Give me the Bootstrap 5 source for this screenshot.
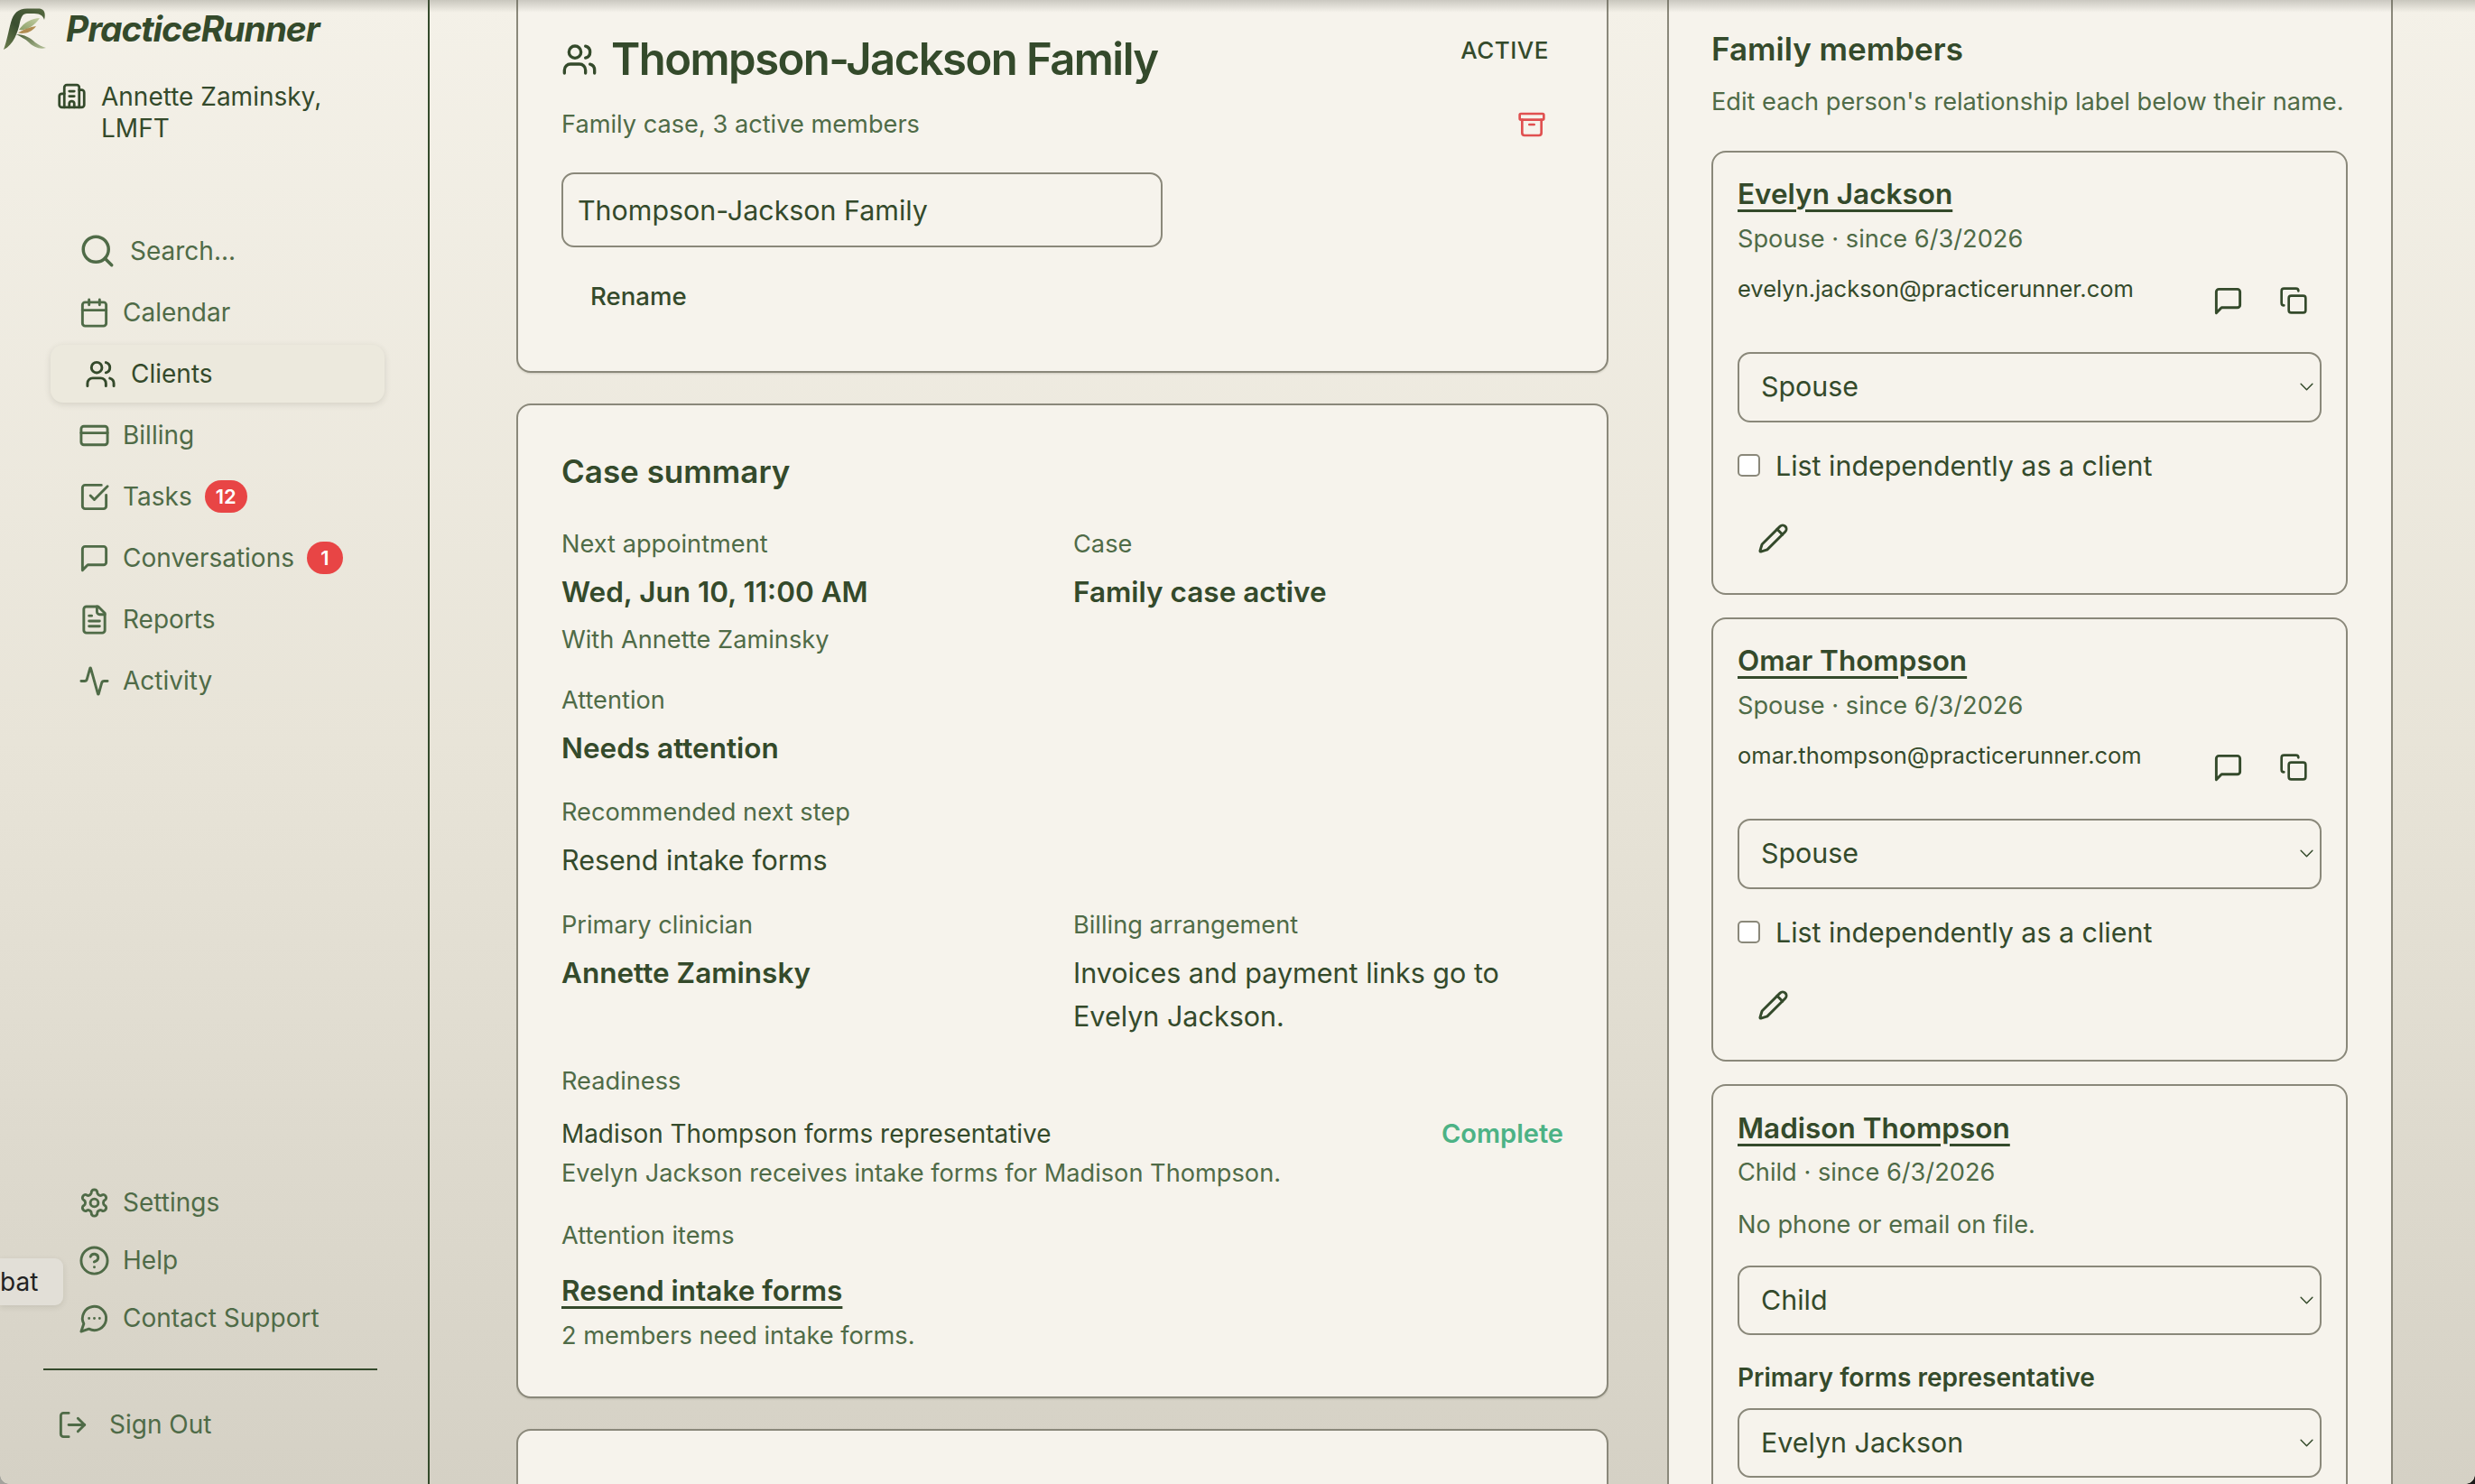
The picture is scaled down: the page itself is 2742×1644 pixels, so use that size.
<!DOCTYPE html>
<html lang="en">
<head>
  <meta charset="UTF-8" />
  <meta name="viewport" content="width=device-width, initial-scale=1" />
  <title>Thompson-Jackson Family</title>
  <link href="https://cdn.jsdelivr.net/npm/bootstrap@5.3.2/dist/css/bootstrap.min.css" rel="stylesheet" />
  <style>
    body {
      height: 1644px;
      overflow: hidden;
      font-family: Inter, "Liberation Sans", sans-serif;
      font-size: 27.2px;
      color: #344a2b;
      background: linear-gradient(180deg, #f4f1e8 0%, #e8e4d8 50%, #d5d1c5 100%);
    }
    .ico { fill: none; stroke: currentColor; stroke-width: 2; stroke-linecap: round; stroke-linejoin: round; flex: none; }
    .top-fade { position: absolute; top: 0; left: 0; right: 0; height: 14px; background: linear-gradient(180deg, rgba(90,90,80,.28), rgba(90,90,80,0)); z-index: 5; pointer-events: none; }
    .win-corner { position: absolute; bottom: 0; width: 10px; height: 10px; z-index: 6; }
    .win-corner.lft { left: 0; background: radial-gradient(circle at 100% 0, transparent 9.5px, #a3a39d 10px); }
    .win-corner.rgt { right: 0; background: radial-gradient(circle at 0 0, transparent 9.5px, #1c1c1a 10px); }

    /* sidebar */
    .side { width: 476px; height: 1644px; border-right: 2px solid #344a2b; flex: none; }
    .brand { height: 64px; gap: 17px; padding-top: 1px; }
    .brand-logo { align-self: flex-start; margin-top: -1px; }
    .brand-name { font-size: 39px; font-weight: 700; font-style: italic; letter-spacing: -1.1px; }
    .org { margin: 26px 0 0 63px; gap: 16px; font-size: 28px; line-height: 35px; width: 340px; }
    .nav-list { margin-top: 84px; }
    .nav-row { height: 64px; margin: 2px 0 2px 56px; width: 370px; padding-left: 31px; gap: 14px; color: #4f6b47; font-size: 28px; border-radius: 14px; text-decoration: none; }
    .nav-row.on { background: #ece9dd; color: #344a2b; padding-left: 38px; gap: 16px; box-shadow: 0 2px 7px rgba(60,60,40,.14); }
    .nav-row.srch { gap: 15px; }
    .bottom-list { margin-top: auto; padding-bottom: 34px; }
    .bottom-list .nav-row { margin: 0 0 0 56px; }
    .side-rule { margin: 24px 0 28px 48px; width: 370px; border-top: 2px solid #344a2b; opacity: 1; }
    .bottom-list .nav-row.out { margin-left: 0; padding-left: 63px; gap: 23px; }
    .count { background: #e84545; color: #fff; font-size: 22px; font-weight: 600; height: 36px; min-width: 40px; padding: 0 12px; display: inline-flex; align-items: center; justify-content: center; }
    .tip { position: absolute; left: 0; top: 1394px; width: 70px; height: 52px; padding-right: 29px; background: #e2dfd7; color: #222; font-size: 28px; line-height: 52px; text-align: right; border-radius: 0 9px 9px 0; box-shadow: 0 2px 6px rgba(60,60,40,.12); }

    /* main columns */
    .main-col { width: 1210px; height: 1644px; overflow: hidden; margin-left: 96px; flex: none; gap: 34px; }
    .sheet { background: #f6f3ec; border: 2px solid #8a887a; border-radius: 16px; padding: 0 48px; flex: none; box-shadow: 0 1px 2px rgba(60,60,40,.18); }
    .sheet-top { margin-top: -40px; height: 453px; padding-top: 73px; }
    .title-ico { margin-right: 15px; }
    .fam-title { font-size: 49px; font-weight: 600; line-height: 60px; letter-spacing: -1.55px; margin: 1px 0 1px; }
    .state { font-size: 26px; font-weight: 500; line-height: 42px; margin-right: 16px; letter-spacing: .5px; }
    .sub-row { margin-top: 22px; }
    .muted { color: #4f6b47; line-height: 38px; }
    .arch { color: #e05050; margin-right: 19px; }
    .name-input { width: 666px; height: 83px; margin-top: 34px; padding: 0 16px; font-size: 30.4px; color: #344a2b; background: transparent; border: 2px solid #8a887a; border-radius: 14px; }
    .btn-rename { margin: 36px 0 0 18px; padding: 0 14px; height: 36px; line-height: 36px; border: 0; font-size: 27.6px; font-weight: 500; color: #344a2b; }

    .sheet-sum { height: 1102px; padding-top: 51px; }
    .sec-head { font-size: 35px; font-weight: 600; line-height: 44px; margin: 0; }
    .sum-grid { display: grid; grid-template-columns: 1fr 1fr; column-gap: 24px; row-gap: 28.5px; margin-top: 40px; }
    .lbl { color: #4f6b47; line-height: 38px; margin-bottom: 10px; }
    .val { font-size: 30.5px; line-height: 48px; }
    .val.strong { font-size: 31.5px; font-weight: 600; }
    .with-line { margin-top: 10px; }
    .ready { margin-top: 29.5px; }
    .ready-row { font-size: 27.9px; line-height: 38px; margin-top: 20px; }
    .done { color: #4cb285; font-weight: 600; font-size: 29px; }
    .ready-note { margin-top: 6px; }
    .attn-head { margin-top: 31px; }
    .act-link { display: inline-block; font-size: 31.5px; font-weight: 600; line-height: 44px; color: #344a2b; text-decoration: underline; text-decoration-thickness: 3px; text-underline-offset: 6px; margin-top: 20px; }
    .sheet-next { height: 200px; }

    /* members panel */
    .panel { width: 804px; margin-left: 65px; height: 1644px; overflow: hidden; flex: none; background: #f6f3ec; border-left: 2px solid #8a887a; border-right: 2px solid #8a887a; padding: 32px 48px 0 47px; }
    .lead-line { color: #4f6b47; line-height: 38px; margin: 18px 0 35px; white-space: nowrap; }
    .person { border: 2px solid #8a887a; border-radius: 16px; padding: 24px 27px 43px; margin-bottom: 25px; }
    .person-name { display: inline-block; font-size: 31.5px; font-weight: 600; line-height: 44px; color: #344a2b; text-decoration: underline; text-decoration-thickness: 3px; text-underline-offset: 6px; }
    .since { color: #4f6b47; line-height: 36px; margin-top: 9px; }
    .mail-row { margin-top: 20px; height: 48px; }
    .mail { font-size: 25.5px; line-height: 34px; }
    .mail-btns { gap: 39px; margin: 13px 15px 0 0; }
    .rel { height: 78px; margin-top: 39px; padding: 0 40px 0 24px; font-size: 30.4px; color: #344a2b; background-color: transparent; border: 2px solid #8a887a; border-radius: 14px;
      background-image: url("data:image/svg+xml,%3csvg xmlns='http://www.w3.org/2000/svg' viewBox='0 0 16 16'%3e%3cpath fill='none' stroke='%23344a2b' stroke-linecap='round' stroke-linejoin='round' stroke-width='1.4' d='M2 5l6 6 6-6'/%3e%3c/svg%3e");
      background-position: right 6px center; background-size: 17px 17px; }
    .list-check { margin: 30px 0 0; min-height: 0; padding: 0; gap: 17px; line-height: 36px; font-size: 30.4px; }
    .list-check .form-check-input { float: none; margin: 0; width: 25px; height: 25px; border: 2px solid #8a887a; border-radius: 5px; background-color: #fff; flex: none; }
    .pen { margin: 45px 0 0 22px; display: block; }
    .person.kid { padding-top: 25px; }
    .no-contact { color: #4f6b47; line-height: 36px; margin-top: 22px; }
    .kid .rel { margin-top: 27px; height: 77px; }
    .rep-lbl { font-size: 28px; font-weight: 600; line-height: 38px; margin: 28px 0 0; }
    .kid .rel.rep { margin-top: 15px; }
  </style>
</head>
<body class="d-flex position-relative">
  <svg width="0" height="0" class="position-absolute">
    <defs>
      <linearGradient id="lgStem" x1="0" y1="1" x2="1" y2="0"><stop offset="0" stop-color="#6b7d4c"/><stop offset=".45" stop-color="#3a4e30"/><stop offset="1" stop-color="#55693f"/></linearGradient>
      <linearGradient id="lgLeaf" x1="0" y1="1" x2="1" y2="0"><stop offset="0" stop-color="#8a9f68"/><stop offset="1" stop-color="#c5cfa3"/></linearGradient>
      <linearGradient id="lgLeg" x1="0" y1="0" x2="1" y2="1"><stop offset="0" stop-color="#4a5f36"/><stop offset="1" stop-color="#b4c098"/></linearGradient>
      <symbol id="i-building" viewBox="0 0 24 24"><path d="M10 12h4M10 8h4M14 21v-3a2 2 0 0 0-4 0v3"/><path d="M6 10H4a2 2 0 0 0-2 2v7a2 2 0 0 0 2 2h16a2 2 0 0 0 2-2V9a2 2 0 0 0-2-2h-2"/><path d="M6 21V5a2 2 0 0 1 2-2h8a2 2 0 0 1 2 2v16"/></symbol>
      <symbol id="i-search" viewBox="0 0 24 24"><circle cx="11" cy="11" r="8"/><path d="m21 21-4.300-4.300"/></symbol>
      <symbol id="i-cal" viewBox="0 0 24 24"><path d="M8 2v4M16 2v4"/><rect x="3" y="4" width="18" height="18" rx="2"/><path d="M3 10h18"/></symbol>
      <symbol id="i-users" viewBox="0 0 24 24"><path d="M16 21v-2a4 4 0 0 0-4-4H6a4 4 0 0 0-4 4v2"/><circle cx="9" cy="7" r="4"/><path d="M22 21v-2a4 4 0 0 0-3-3.870"/><path d="M16 3.130a4 4 0 0 1 0 7.750"/></symbol>
      <symbol id="i-card" viewBox="0 0 24 24"><rect x="2" y="5" width="20" height="14" rx="2"/><path d="M2 10h20"/></symbol>
      <symbol id="i-check" viewBox="0 0 24 24"><path d="M21 10.656V19a2 2 0 0 1-2 2H5a2 2 0 0 1-2-2V5a2 2 0 0 1 2-2h12.344"/><path d="m9 11 3 3L22 4"/></symbol>
      <symbol id="i-msg" viewBox="0 0 24 24"><path d="M21 15a2 2 0 0 1-2 2H7l-4 4V5a2 2 0 0 1 2-2h14a2 2 0 0 1 2 2z"/></symbol>
      <symbol id="i-file" viewBox="0 0 24 24"><path d="M15 2H6a2 2 0 0 0-2 2v16a2 2 0 0 0 2 2h12a2 2 0 0 0 2-2V7Z"/><path d="M14 2v4a2 2 0 0 0 2 2h4"/><path d="M10 9H8M16 13H8M16 17H8"/></symbol>
      <symbol id="i-pulse" viewBox="0 0 24 24"><path d="M22 12h-2.480a2 2 0 0 0-1.930 1.460l-2.350 8.360a.25.25 0 0 1-.48 0L9.240 2.180a.25.25 0 0 0-.48 0l-2.350 8.360A2 2 0 0 1 4.490 12H2"/></symbol>
      <symbol id="i-gear" viewBox="0 0 24 24"><path d="M12.220 2h-.44a2 2 0 0 0-2 2v.18a2 2 0 0 1-1 1.730l-.43.25a2 2 0 0 1-2 0l-.15-.08a2 2 0 0 0-2.730.73l-.22.38a2 2 0 0 0 .73 2.730l.15.1a2 2 0 0 1 1 1.720v.51a2 2 0 0 1-1 1.740l-.15.09a2 2 0 0 0-.73 2.730l.22.38a2 2 0 0 0 2.730.73l.15-.08a2 2 0 0 1 2 0l.43.25a2 2 0 0 1 1 1.730V20a2 2 0 0 0 2 2h.44a2 2 0 0 0 2-2v-.18a2 2 0 0 1 1-1.730l.43-.25a2 2 0 0 1 2 0l.15.08a2 2 0 0 0 2.730-.73l.22-.39a2 2 0 0 0-.73-2.730l-.15-.08a2 2 0 0 1-1-1.740v-.5a2 2 0 0 1 1-1.740l.15-.09a2 2 0 0 0 .73-2.730l-.22-.38a2 2 0 0 0-2.730-.73l-.15.08a2 2 0 0 1-2 0l-.43-.25a2 2 0 0 1-1-1.730V4a2 2 0 0 0-2-2z"/><circle cx="12" cy="12" r="3"/></symbol>
      <symbol id="i-help" viewBox="0 0 24 24"><circle cx="12" cy="12" r="10"/><path d="M9.090 9a3 3 0 0 1 5.830 1c0 2-3 3-3 3"/><path d="M12 17h.01"/></symbol>
      <symbol id="i-chat" viewBox="0 0 24 24"><path d="M7.900 20A9 9 0 1 0 4 16.100L2 22Z"/><path d="M8 12h.01M12 12h.01M16 12h.01"/></symbol>
      <symbol id="i-out" viewBox="0 0 24 24"><path d="M9 21H5a2 2 0 0 1-2-2V5a2 2 0 0 1 2-2h4"/><path d="m16 17 5-5-5-5"/><path d="M21 12H9"/></symbol>
      <symbol id="i-archive" viewBox="0 0 24 24"><rect x="2" y="3" width="20" height="5" rx="1"/><path d="M4 8v11a2 2 0 0 0 2 2h12a2 2 0 0 0 2-2V8"/><path d="M10 12h4"/></symbol>
      <symbol id="i-copy" viewBox="0 0 24 24"><rect x="8" y="8" width="14" height="14" rx="2"/><path d="M4 16c-1.100 0-2-.9-2-2V4c0-1.100.9-2 2-2h10c1.100 0 2 .9 2 2"/></symbol>
      <symbol id="i-pen" viewBox="0 0 24 24"><path d="M21.174 6.812a1 1 0 0 0-3.986-3.987L3.842 16.174a2 2 0 0 0-.5.83l-1.321 4.352a.5.5 0 0 0 .623.622l4.353-1.320a2 2 0 0 0 .83-.497z"/><path d="m15 5 4 4"/></symbol>
    </defs>
  </svg>

  <div class="top-fade"></div>
  <div class="win-corner lft"></div>
  <div class="win-corner rgt"></div>

  <!-- Sidebar -->
  <aside class="side d-flex flex-column">
    <div class="brand d-flex align-items-center">
      <svg class="brand-logo" width="56" height="60" viewBox="0 0 56 60">
        <path d="M4 55C8 44 9 36 12 25 15 14 20 10 30 9.500L44 9.500C49 10 51 15 49 22 48 18 45 15 38 15L30 15C25 15 23.500 19 22 25 20 35 15 50 4 55Z" fill="url(#lgStem)"/>
        <path d="M44 20C36 20 26 25 21 33 29 34 38 29 44 20Z" fill="url(#lgLeaf)"/>
        <path d="M40 29C33 30 25 33 20 36.500 27 38 35 36 40 29Z" fill="#b08c50"/>
        <path d="M18 38C27 38 34 42 39 47 43 50 47 52 51 53 44 55 37 52 32 47 28 43 23 41 18 38Z" fill="url(#lgLeg)"/>
      </svg>
      <span class="brand-name">PracticeRunner</span>
    </div>
    <div class="org d-flex">
      <svg class="ico" width="33" height="33"><use href="#i-building"/></svg>
      <span>Annette Zaminsky, LMFT</span>
    </div>

    <nav class="nav-list d-flex flex-column">
      <a class="nav-row srch d-flex align-items-center" href="#"><svg class="ico" width="42" height="42"><use href="#i-search"/></svg>Search...</a>
      <a class="nav-row d-flex align-items-center" href="#"><svg class="ico" width="35" height="35"><use href="#i-cal"/></svg>Calendar</a>
      <a class="nav-row on d-flex align-items-center" href="#"><svg class="ico" width="35" height="35"><use href="#i-users"/></svg>Clients</a>
      <a class="nav-row d-flex align-items-center" href="#"><svg class="ico" width="35" height="35"><use href="#i-card"/></svg>Billing</a>
      <a class="nav-row d-flex align-items-center" href="#"><svg class="ico" width="35" height="35"><use href="#i-check"/></svg>Tasks<span class="badge rounded-pill count">12</span></a>
      <a class="nav-row d-flex align-items-center" href="#"><svg class="ico" width="35" height="35"><use href="#i-msg"/></svg>Conversations<span class="badge rounded-pill count">1</span></a>
      <a class="nav-row d-flex align-items-center" href="#"><svg class="ico" width="35" height="35"><use href="#i-file"/></svg>Reports</a>
      <a class="nav-row d-flex align-items-center" href="#"><svg class="ico" width="35" height="35"><use href="#i-pulse"/></svg>Activity</a>
    </nav>

    <div class="bottom-list d-flex flex-column">
      <a class="nav-row d-flex align-items-center" href="#"><svg class="ico" width="35" height="35"><use href="#i-gear"/></svg>Settings</a>
      <a class="nav-row d-flex align-items-center" href="#"><svg class="ico" width="35" height="35"><use href="#i-help"/></svg>Help</a>
      <a class="nav-row d-flex align-items-center" href="#"><svg class="ico" width="35" height="35"><use href="#i-chat"/></svg>Contact Support</a>
      <hr class="side-rule">
      <a class="nav-row out d-flex align-items-center" href="#"><svg class="ico" width="35" height="35"><use href="#i-out"/></svg>Sign Out</a>
    </div>
  </aside>
  <div class="tip">bat</div>

  <!-- Case column -->
  <main class="main-col d-flex flex-column">
    <section class="sheet sheet-top">
      <div class="d-flex justify-content-between align-items-start">
        <div class="d-flex align-items-center">
          <svg class="ico title-ico" width="40" height="40"><use href="#i-users"/></svg>
          <h1 class="fam-title">Thompson-Jackson Family</h1>
        </div>
        <span class="state">ACTIVE</span>
      </div>
      <div class="sub-row d-flex justify-content-between align-items-center">
        <span class="muted">Family case, 3 active members</span>
        <svg class="ico arch" width="32" height="32"><use href="#i-archive"/></svg>
      </div>
      <input class="form-control name-input" type="text" value="Thompson-Jackson Family">
      <button type="button" class="btn btn-rename d-block">Rename</button>
    </section>

    <section class="sheet sheet-sum">
      <h2 class="sec-head">Case summary</h2>
      <div class="sum-grid">
        <div>
          <div class="lbl">Next appointment</div>
          <div class="val strong">Wed, Jun 10, 11:00 AM</div>
          <div class="muted with-line">With Annette Zaminsky</div>
        </div>
        <div>
          <div class="lbl">Case</div>
          <div class="val strong">Family case active</div>
        </div>
        <div>
          <div class="lbl">Attention</div>
          <div class="val strong">Needs attention</div>
        </div>
        <div></div>
        <div>
          <div class="lbl">Recommended next step</div>
          <div class="val">Resend intake forms</div>
        </div>
        <div></div>
        <div>
          <div class="lbl">Primary clinician</div>
          <div class="val strong">Annette Zaminsky</div>
        </div>
        <div>
          <div class="lbl">Billing arrangement</div>
          <div class="val">Invoices and payment links go to Evelyn Jackson.</div>
        </div>
      </div>
      <div class="ready">
        <div class="muted">Readiness</div>
        <div class="ready-row d-flex justify-content-between">
          <span>Madison Thompson forms representative</span>
          <span class="done">Complete</span>
        </div>
        <div class="muted ready-note">Evelyn Jackson receives intake forms for Madison Thompson.</div>
        <div class="muted attn-head">Attention items</div>
        <a class="act-link" href="#">Resend intake forms</a>
        <div class="muted mt-2">2 members need intake forms.</div>
      </div>
    </section>

    <section class="sheet sheet-next"></section>
  </main>

  <!-- Members column -->
  <div class="panel">
    <h2 class="sec-head">Family members</h2>
    <p class="lead-line">Edit each person's relationship label below their name.</p>

    <div class="person">
      <a class="person-name" href="#">Evelyn Jackson</a>
      <div class="since">Spouse · since 6/3/2026</div>
      <div class="mail-row d-flex justify-content-between align-items-start">
        <span class="mail">evelyn.jackson@practicerunner.com</span>
        <div class="mail-btns d-flex align-items-center">
          <svg class="ico" width="35" height="35"><use href="#i-msg"/></svg>
          <svg class="ico" width="32" height="32"><use href="#i-copy"/></svg>
        </div>
      </div>
      <select class="form-select rel"><option>Spouse</option></select>
      <label class="form-check list-check d-flex align-items-center">
        <input class="form-check-input" type="checkbox">
        <span>List independently as a client</span>
      </label>
      <svg class="ico pen" width="35" height="35"><use href="#i-pen"/></svg>
    </div>

    <div class="person">
      <a class="person-name" href="#">Omar Thompson</a>
      <div class="since">Spouse · since 6/3/2026</div>
      <div class="mail-row d-flex justify-content-between align-items-start">
        <span class="mail">omar.thompson@practicerunner.com</span>
        <div class="mail-btns d-flex align-items-center">
          <svg class="ico" width="35" height="35"><use href="#i-msg"/></svg>
          <svg class="ico" width="32" height="32"><use href="#i-copy"/></svg>
        </div>
      </div>
      <select class="form-select rel"><option>Spouse</option></select>
      <label class="form-check list-check d-flex align-items-center">
        <input class="form-check-input" type="checkbox">
        <span>List independently as a client</span>
      </label>
      <svg class="ico pen" width="35" height="35"><use href="#i-pen"/></svg>
    </div>

    <div class="person kid">
      <a class="person-name" href="#">Madison Thompson</a>
      <div class="since">Child · since 6/3/2026</div>
      <div class="no-contact">No phone or email on file.</div>
      <select class="form-select rel"><option>Child</option></select>
      <div class="rep-lbl">Primary forms representative</div>
      <select class="form-select rel rep"><option>Evelyn Jackson</option></select>
    </div>
  </div>
</body>
</html>
